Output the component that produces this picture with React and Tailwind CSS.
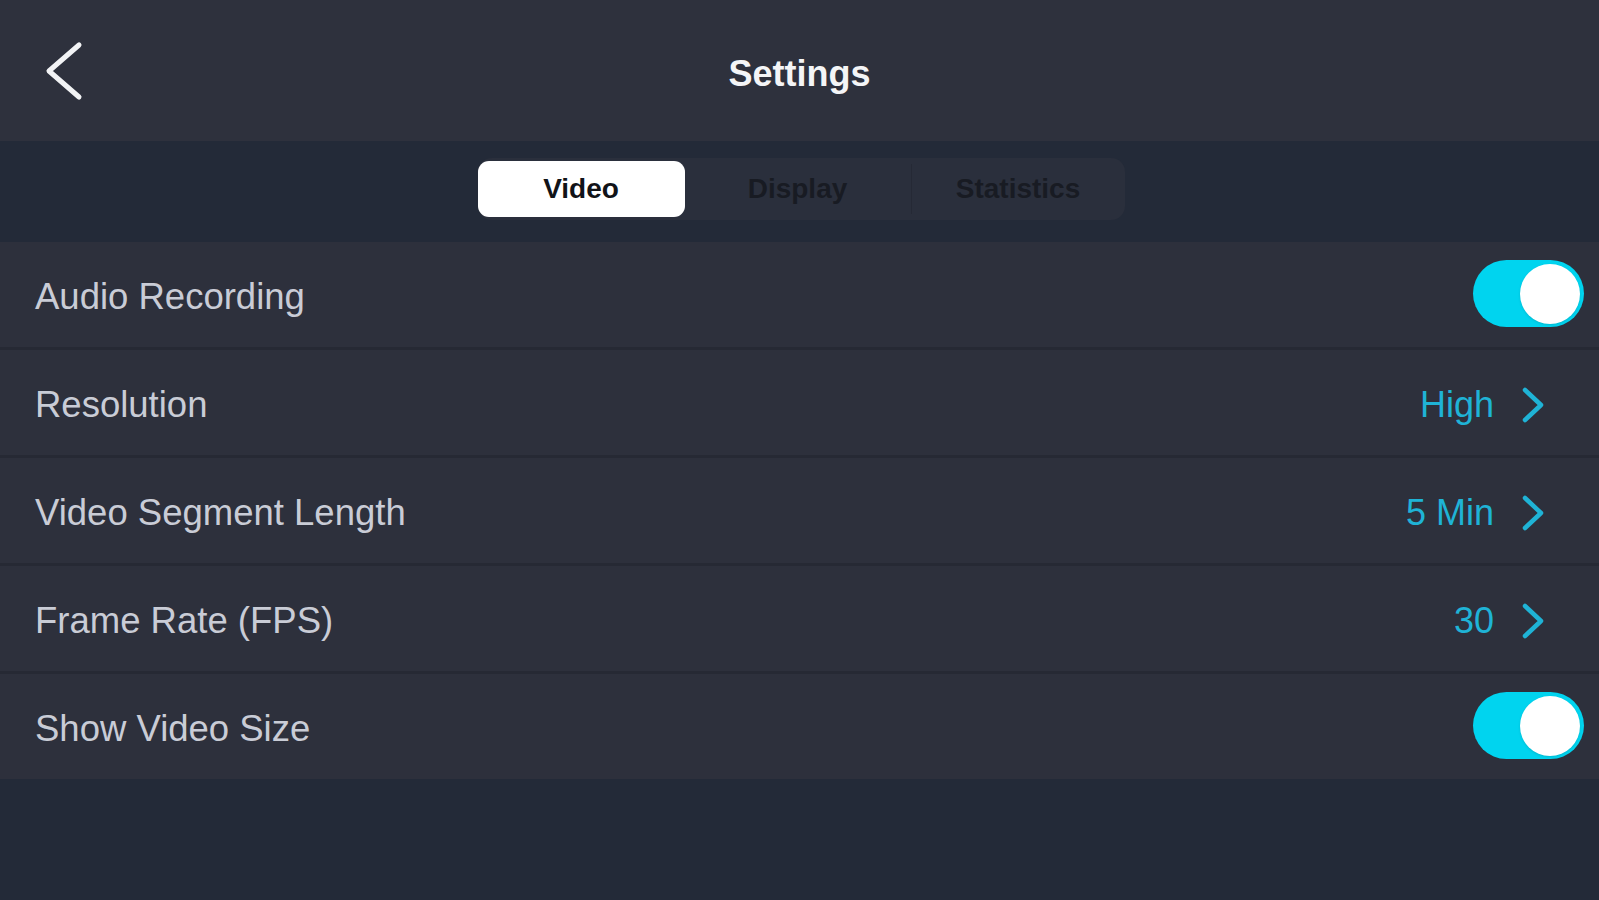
import React, { useState } from 'react';

const rows = [
    { label: 'Audio Recording', type: 'toggle' },
    { label: 'Resolution', type: 'value', value: 'High' },
    { label: 'Video Segment Length', type: 'value', value: '5 Min' },
    { label: 'Frame Rate (FPS)', type: 'value', value: '30' },
    { label: 'Show Video Size', type: 'toggle' },
];

const tabs = [
    { name: 'Video', width: 'w-[207px]' },
    { name: 'Display', width: 'w-[226px]' },
    { name: 'Statistics', width: 'w-[213px]' },
];

const Toggle = ({ on, onClick }) => (
    <button
        onClick={onClick}
        className={`relative w-[111px] h-[67px] rounded-full transition-colors ${on ? 'bg-[#00d4ef]' : 'bg-[#4a4e5a]'}`}
    >
        <span
            className={`absolute top-[3.5px] w-[60px] h-[60px] rounded-full bg-white shadow transition-all ${on ? 'right-[4px]' : 'left-[4px]'}`}
        />
    </button>
);

const ChevronRight = () => (
    <svg width="22" height="36" viewBox="0 0 22 36" fill="none">
        <path d="M3 3 L19 18 L3 33" stroke="#1fb3d6" strokeWidth="4.5" strokeLinecap="round" strokeLinejoin="round" />
    </svg>
);

export default function App() {
    const [activeTab, setActiveTab] = useState('Video');
    const [toggles, setToggles] = useState({ 'Audio Recording': true, 'Show Video Size': true });

    return (
        <div className="w-full min-h-[900px] bg-[#232a38] font-['Liberation_Sans',Arial,sans-serif]">
            {/* Header */}
            <header className="h-[141px] bg-[#2e313d] grid grid-cols-[1fr_auto_1fr] items-center">
                <div className="pl-[44px]">
                    <button className="block">
                        <svg width="40" height="60" viewBox="0 0 40 60" fill="none">
                            <path d="M35 4 L5 30 L35 56" stroke="#f2f3f5" strokeWidth="5" strokeLinecap="round" strokeLinejoin="round" />
                        </svg>
                    </button>
                </div>
                <h1 className="text-[36px] font-bold text-[#f4f5f7] pt-[6px]">Settings</h1>
                <div />
            </header>

            {/* Tabs */}
            <div className="h-[101px] flex items-start justify-center pt-[17px]">
                <div className="flex items-center py-[3px] ml-[3px] rounded-[14px] bg-[#2a2f3c]">
                    {tabs.map((tab, i) => (
                        <div key={tab.name} className="flex items-center">
                            {i === 2 && activeTab === 'Video' && (
                                <div className="w-px h-[50px] bg-[#252935]" />
                            )}
                            <button
                                onClick={() => setActiveTab(tab.name)}
                                className={`${activeTab === tab.name ? 'w-[207px]' : tab.width} h-[56px] rounded-[11px] text-[28px] font-semibold ${
                                    activeTab === tab.name
                                        ? 'bg-white text-[#111318]'
                                        : 'text-[#181b23]'
                                }`}
                            >
                                {tab.name}
                            </button>
                        </div>
                    ))}
                </div>
            </div>

            {/* Rows */}
            <div className="flex flex-col gap-[3px] bg-[#262934]">
                {rows.map((row) => (
                    <div key={row.label} className="h-[105px] pt-[5px] bg-[#2d303c] flex items-center justify-between pl-[35px]">
                        <span className="text-[36.5px] text-[#c9ccd6]">{row.label}</span>
                        {row.type === 'toggle' ? (
                            <div className="pr-[15px]">
                                <Toggle
                                    on={toggles[row.label]}
                                    onClick={() => setToggles((t) => ({ ...t, [row.label]: !t[row.label] }))}
                                />
                            </div>
                        ) : (
                            <div className="flex items-center gap-[28px] pr-[55px]">
                                <span className="text-[36px] text-[#1fb3d6]">{row.value}</span>
                                <ChevronRight />
                            </div>
                        )}
                    </div>
                ))}
            </div>
        </div>
    );
}
